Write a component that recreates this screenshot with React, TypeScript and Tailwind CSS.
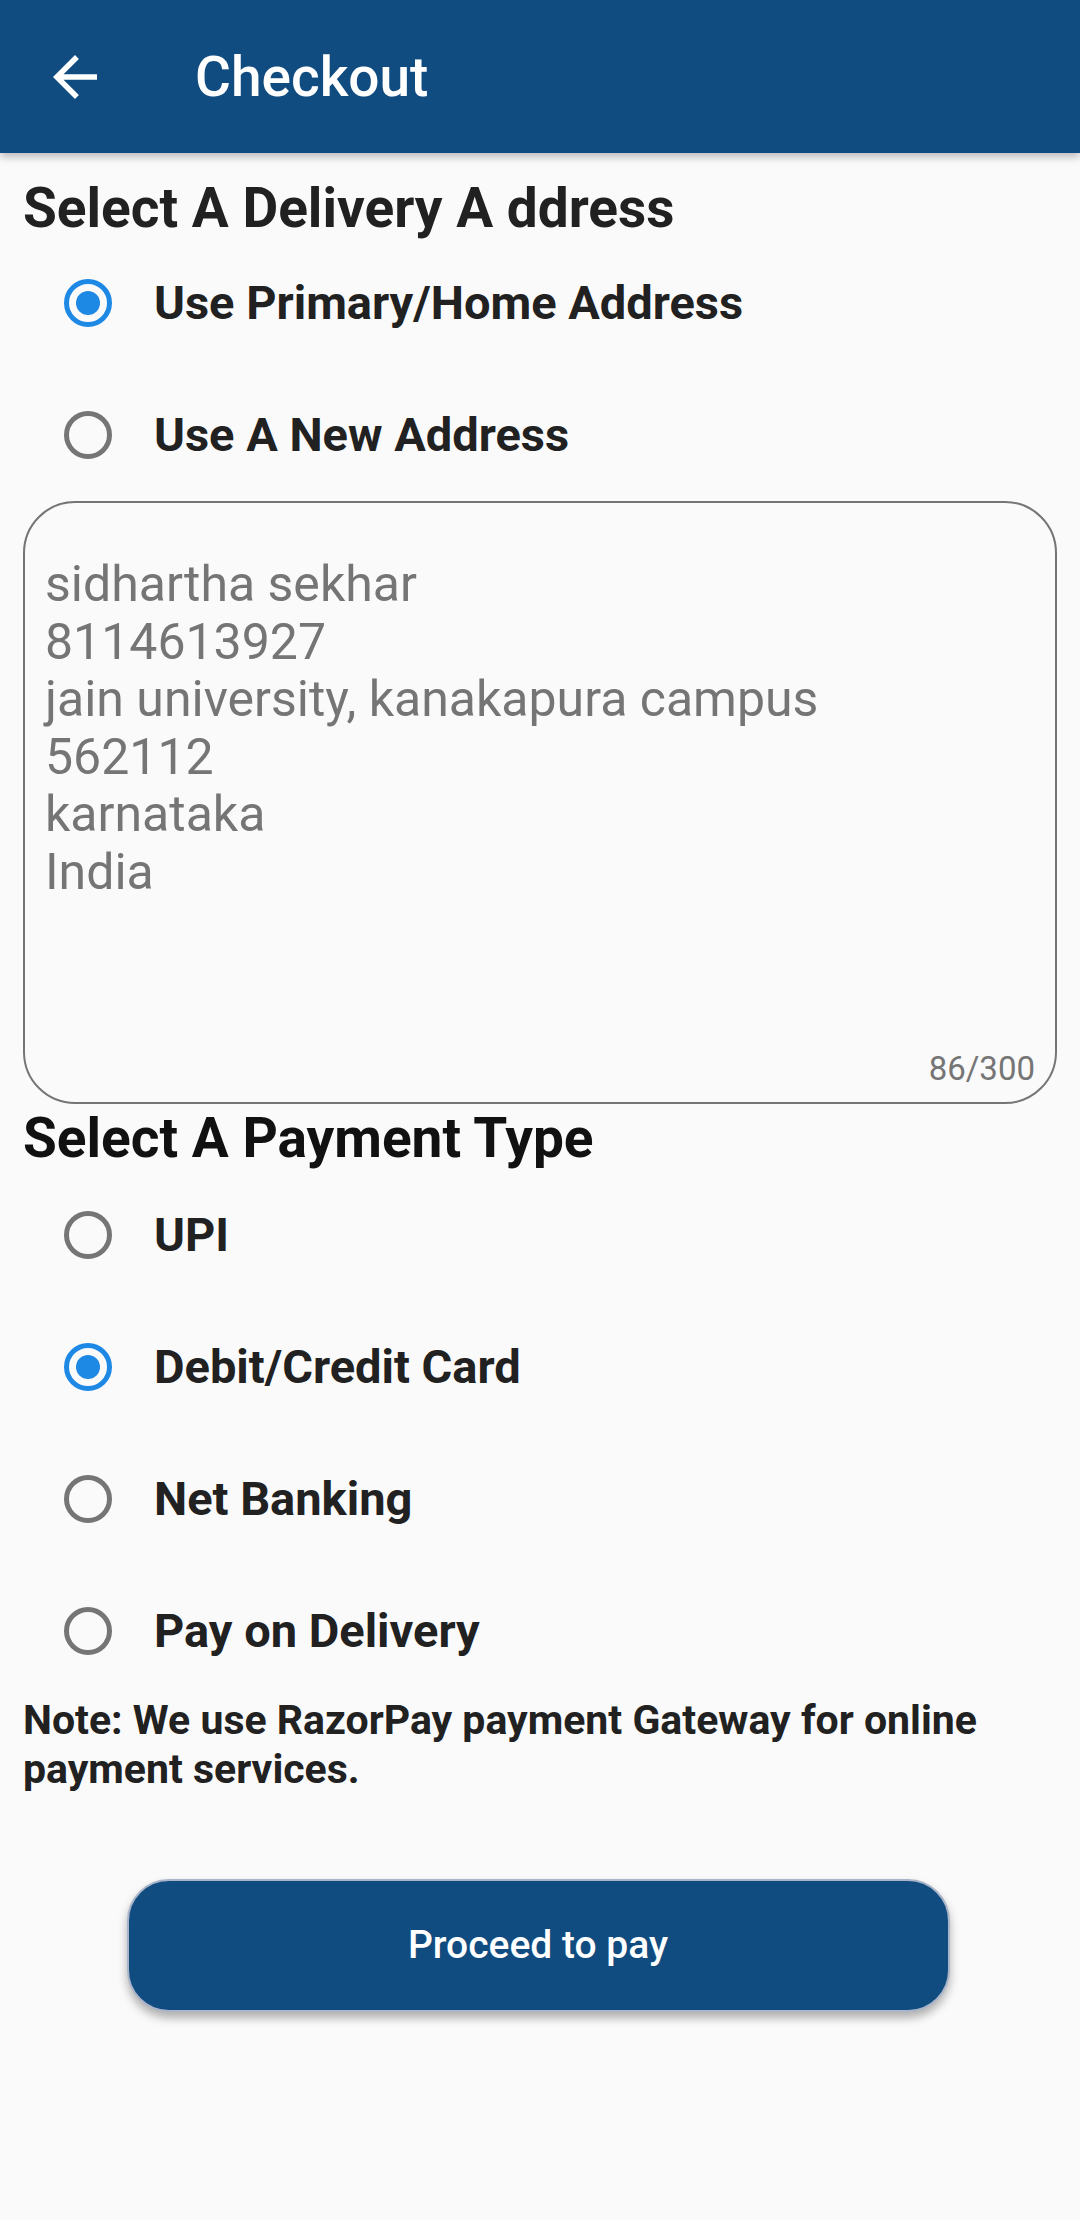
import { useState } from "react";

const addressLines = [
  "sidhartha sekhar",
  "8114613927",
  "jain university, kanakapura campus",
  "562112",
  "karnataka",
  "India",
];

const paymentTypes = ["UPI", "Debit/Credit Card", "Net Banking", "Pay on Delivery"];

function Radio({ checked }: { checked: boolean }) {
  return (
    <div
      className={`w-[48px] h-[48px] rounded-full border-[5px] flex items-center justify-center shrink-0 ${
        checked ? "border-[#1e88e5]" : "border-[#757575]"
      }`}
    >
      {checked && <div className="w-[24px] h-[24px] rounded-full bg-[#1e88e5]" />}
    </div>
  );
}

function RadioRow({
  label,
  checked,
  onClick,
}: {
  label: string;
  checked: boolean;
  onClick: () => void;
}) {
  return (
    <div onClick={onClick} className="h-[132px] flex items-center pl-[64px] cursor-pointer">
      <Radio checked={checked} />
      <span className="ml-[42px] text-[47px] font-bold text-[#212121] leading-[54px]">{label}</span>
    </div>
  );
}

export default function App() {
  const [address, setAddress] = useState(0);
  const [payment, setPayment] = useState(1);

  return (
    <div
      className="min-h-[2220px] w-[1080px] bg-[#fafafa]"
      style={{ fontFamily: "Roboto, 'Noto Sans', sans-serif" }}
    >
      {/* App bar */}
      <div className="h-[153px] bg-[#114c80] flex items-center shadow-[0_4px_8px_rgba(0,0,0,0.25)] relative z-10">
        <div className="ml-[42px] w-[66px] h-[66px] flex items-center justify-center">
          <svg viewBox="0 0 24 24" className="w-[66px] h-[66px]" fill="#ffffff">
            <path d="M20 11H7.83l5.59-5.59L12 4l-8 8 8 8 1.41-1.41L7.83 13H20v-2z" />
          </svg>
        </div>
        <h1 className="ml-[87px] text-[55px] font-medium text-white leading-[64px]">Checkout</h1>
      </div>

      <div className="px-[23px] pt-[23px]">
        <h2 className="text-[55px] font-bold text-[#212121] leading-[64px]">Select A Delivery A ddress</h2>
        <div className="-mx-[23px] -mt-[3px]">
          <RadioRow label="Use Primary/Home Address" checked={address === 0} onClick={() => setAddress(0)} />
          <RadioRow label="Use A New Address" checked={address === 1} onClick={() => setAddress(1)} />
        </div>

        {/* Address box */}
        <div className="h-[603px] border-2 border-[#757575] rounded-[52px] flex flex-col pl-[20px] pr-[20px] pt-[53px] pb-[13px]">
          <div className="text-[50px] text-[#757575] leading-[57.5px]">
            {addressLines.map((l) => (
              <div key={l}>{l}</div>
            ))}
          </div>
          <div className="mt-auto text-right text-[33px] text-[#757575] leading-[40px]">86/300</div>
        </div>

        <h2 className="mt-[3px] text-[55px] font-bold text-[#111111] leading-[62px]">Select A Payment Type</h2>
        <div className="-mx-[23px]">
          {paymentTypes.map((p, i) => (
            <RadioRow key={p} label={p} checked={payment === i} onClick={() => setPayment(i)} />
          ))}
        </div>

        <p className="-mt-[1px] text-[41px] font-bold text-[#212121] leading-[49px]">
          Note: We use RazorPay payment Gateway for online payment services.
        </p>

        <div className="flex justify-center pt-[85px] -ml-[4px]">
          <button className="w-[823px] h-[133px] rounded-[42px] bg-[#114c80] border-2 border-[#aab5c9] shadow-[0_6px_10px_rgba(0,0,0,0.3)] text-white text-[39px] font-medium">
            Proceed to pay
          </button>
        </div>
      </div>
    </div>
  );
}
